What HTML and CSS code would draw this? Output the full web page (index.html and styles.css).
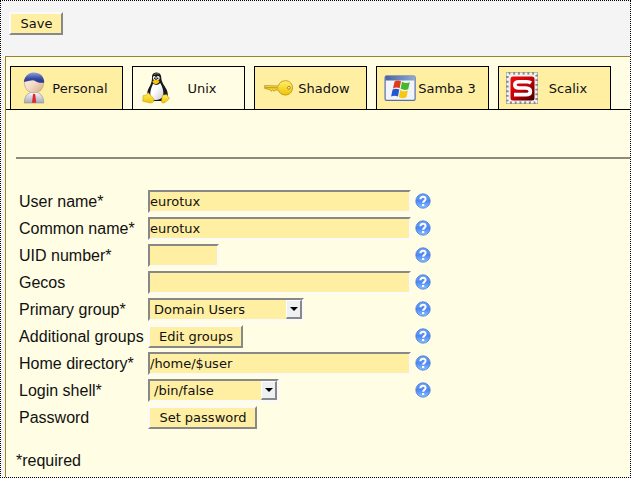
FILE: index.html
```html
<!DOCTYPE html>
<html lang="en">
<head>
<meta charset="utf-8">
<title>User account</title>
<link rel="stylesheet" href="styles.css">
</head>
<body>
<svg width="0" height="0" class="defs">
  <defs>
    <linearGradient id="helpFill" x1="0" y1="0" x2="0" y2="1"><stop offset="0" stop-color="#6ea4f4"/><stop offset=".5" stop-color="#4d86f4"/><stop offset="1" stop-color="#8cc4ff"/></linearGradient>
    <linearGradient id="hair" x1="0" y1="0" x2="0" y2="1"><stop offset="0" stop-color="#8fa4e0"/><stop offset=".6" stop-color="#3649a0"/><stop offset="1" stop-color="#26348a"/></linearGradient>
    <linearGradient id="skin" x1="0" y1="0" x2="1" y2="1"><stop offset="0" stop-color="#fff0e0"/><stop offset=".5" stop-color="#f3dcc8"/><stop offset="1" stop-color="#d6a77e"/></linearGradient>
    <linearGradient id="coat" x1="0" y1="0" x2="0" y2="1"><stop offset="0" stop-color="#f5f5fa"/><stop offset="1" stop-color="#a9a9b8"/></linearGradient>
    <linearGradient id="gold" x1="0" y1="0" x2="0" y2="1"><stop offset="0" stop-color="#fff06a"/><stop offset="1" stop-color="#efc400"/></linearGradient>
    <linearGradient id="red" x1="0" y1="0" x2="1" y2="1"><stop offset="0" stop-color="#f00c10"/><stop offset=".5" stop-color="#c40008"/><stop offset="1" stop-color="#3c0000"/></linearGradient>
    <linearGradient id="bar" x1="0" y1="0" x2="1" y2="0"><stop offset="0" stop-color="#4a64a4"/><stop offset="1" stop-color="#8fa8d4"/></linearGradient>
    <linearGradient id="belly" x1="0" y1="0" x2="1" y2="1"><stop offset=".4" stop-color="#fff"/><stop offset="1" stop-color="#c8c8d0"/></linearGradient>
    <symbol id="help" viewBox="0 0 16 16">
      <circle cx="8" cy="8" r="7.2" fill="url(#helpFill)" stroke="#4478d8" stroke-width=".8"/>
      <path d="M5.4 6.2C5.5 2.9 10.7 2.9 10.6 6.1C10.6 7.8 8.1 8 8.1 9.8" fill="none" stroke="#fff" stroke-width="2"/>
      <rect x="7" y="11" width="2.2" height="2" fill="#fff"/>
    </symbol>
  </defs>
</svg>
<div class="page">
  <div class="toolbar"><button class="button save">Save</button></div>
  <div class="panel">
    <div class="tabs">
      <div class="tab">
        <svg class="icon" viewBox="0 0 32 32">
          <path d="M6.3 31C6.5 25 8.5 21.8 13 20.5H19C23.5 21.8 25.5 25 25.8 31Z" fill="url(#coat)" stroke="#8b8b98" stroke-width=".6"/>
          <path d="M12 20.5L16 25L20 20.5Z" fill="#fff"/>
          <path d="M15 22H17.2L18.2 30.8H14Z" fill="#e0282b"/>
          <ellipse cx="16" cy="11.3" rx="9.6" ry="9.8" fill="url(#skin)" stroke="#b0998a" stroke-width=".6"/>
          <path d="M5.8 10C7 3 11 .5 16 .5C22 .5 26 4 26.3 10.5C23 11.2 19 10.4 15.5 8.2C12 8.4 8.5 9.2 5.8 10Z" fill="url(#hair)"/>
        </svg>
        <span class="caption">Personal</span>
      </div>
      <div class="tab active">
        <svg class="icon" viewBox="0 0 32 32">
          <path d="M12 4.5C12-.8 21-.8 21.2 4.8C21.2 10 24 13 26.3 17C29 22 28 28.5 24 29H11C6 27 6.5 20 8.8 16C11 12 12.3 9 12 4.5Z" fill="#181818"/>
          <path d="M13.2 11.5C15 13.5 18 13.4 20.2 11C22.5 15 24 19 23.2 24C21 28.5 13.5 29 11.3 26.4C9 22 11.2 15.6 13.2 11.5Z" fill="url(#belly)"/>
          <path d="M14 2.5Q16.5 1 19 2" fill="none" stroke="#777" stroke-width="1"/>
          <ellipse cx="14.3" cy="6" rx="1.4" ry="2" fill="#fff"/><ellipse cx="18" cy="6" rx="1.7" ry="2.1" fill="#fff"/>
          <circle cx="14.6" cy="6.3" r=".7"/><circle cx="17.7" cy="6.3" r=".8"/>
          <path d="M12.4 9.2Q16 6.4 19.5 9Q19.5 11 16.4 12.2Q13 11.8 12.4 9.2Z" fill="#ffc20a"/>
          <path d="M8 20.4L13.8 26.8Q14.5 30.8 10.5 31L2.7 29.2L3.2 23.5L6.2 23.1Z" fill="url(#gold)" stroke="#c78e00" stroke-width=".5"/>
          <path d="M22.4 23.3L26.5 22.6L29.5 26.5L25.5 30.1Q22.2 32.2 21.4 29.5Z" fill="url(#gold)" stroke="#c78e00" stroke-width=".5"/>
        </svg>
        <span class="caption">Unix</span>
      </div>
      <div class="tab">
        <svg class="icon" viewBox="0 0 32 32">
          <path d="M2.7 13.6L16.1 14C17.3 10.5 20 8.7 23.5 8.7C27.7 8.7 30.6 12 30.5 15.9C30.4 20 27.5 23 23.3 23C19.9 23 17.2 21 16.3 18H13.3L12.1 19.3L10.7 18L9.1 19.2L7.5 17.5L2.7 16.4Z" fill="url(#gold)" stroke="#b68e17" stroke-width=".8"/>
          <path d="M3.3 15.6L16.5 15.9" stroke="#a98625" stroke-width=".8"/>
          <circle cx="26.9" cy="15.8" r="1.4" fill="#fff5c0" stroke="#927019" stroke-width=".8"/>
        </svg>
        <span class="caption">Shadow</span>
      </div>
      <div class="tab">
        <svg class="icon" viewBox="0 0 32 32">
          <rect x="1.1" y="4" width="30" height="24.3" rx="1.4" fill="#f3f4fb" stroke="#5770a8" stroke-width="1.2"/>
          <path d="M1.5 3.7H30.8V8.5H1.5Z" fill="url(#bar)"/>
          <path d="M10.6 9.5Q13.5 7.5 17 9.3L15.6 16.2Q12.3 14.8 9 16.4Z" fill="#df3b17"/>
          <path d="M18 9.8Q21.8 12 25.8 10.3L24.2 17.3Q20.5 18.8 16.6 16.8Z" fill="#47b72b"/>
          <path d="M8.6 17.6Q12 16 15.3 17.6L13.9 24.4Q10.3 23 7.1 24.6Z" fill="#2457cf"/>
          <path d="M16.3 18.1Q20 20.2 23.9 18.6L22.4 25.3Q18.4 27.2 14.8 24.9Z" fill="#f7c811"/>
        </svg>
        <span class="caption samba">Samba 3</span>
      </div>
      <div class="tab">
        <svg class="icon" viewBox="0 0 32 32">
          <rect width="32" height="32" fill="#8b8a84"/>
          <rect x="2.6" y="2.6" width="26.8" height="26.8" fill="#f4f2ee"/>
          <rect x="1.8" y="1.8" width="28.4" height="28.4" fill="none" stroke="#f4f2ee" stroke-width="2.6" stroke-dasharray="2.8 1.93" stroke-dashoffset="-2.6"/>
          <rect x="4.5" y="4.5" width="24" height="24" rx="2.5" fill="url(#red)"/>
          <path d="M25 11Q23.5 9.8 21 9.8H13Q8.8 9.8 8.8 13Q8.8 15.8 13 16H20Q24.4 16.2 24.4 19.4Q24.4 22.5 20 22.6H8" fill="none" stroke="#fff" stroke-width="3.6"/>
        </svg>
        <span class="caption">Scalix</span>
      </div>
    </div>
    <div class="content">
      <div class="rule"></div>
      <div class="form">
        <label>User name*</label><div><input class="field" value="eurotux"></div><svg class="help"><use href="#help"/></svg>
        <label>Common name*</label><div><input class="field" value="eurotux"></div><svg class="help"><use href="#help"/></svg>
        <label>UID number*</label><div><input class="field short"></div><svg class="help"><use href="#help"/></svg>
        <label>Gecos</label><div><input class="field"></div><svg class="help"><use href="#help"/></svg>
        <label>Primary group*</label><div><div class="select group"><span>Domain Users</span><i class="drop"></i></div></div><svg class="help"><use href="#help"/></svg>
        <label class="wide">Additional groups</label><div><button class="button edit">Edit groups</button></div><svg class="help"><use href="#help"/></svg>
        <label>Home directory*</label><div><input class="field" value="/home/$user"></div><svg class="help"><use href="#help"/></svg>
        <label>Login shell*</label><div><div class="select shell"><span>/bin/false</span><i class="drop"></i></div></div><svg class="help"><use href="#help"/></svg>
        <label>Password</label><div><button class="button password">Set password</button></div>
      </div>
      <p class="note">*required</p>
    </div>
  </div>
</div>
</body>
</html>
```
FILE: styles.css
```css
* { box-sizing: border-box; }
body {
  margin: 0;
  height: 478px;
  overflow: hidden;
  background: #f4f4f4;
  color: #111;
  font: 16px "Liberation Sans", sans-serif;
}
.defs { position: absolute; }
.page {
  height: 478px;
  border: 1px dotted #000;
  display: flex;
  flex-direction: column;
}
.toolbar { height: 55px; padding: 11px 0 0 8px; }
.button, .field, .select {
  display: block;
  margin: 0;
  background: #ffefa3;
  color: #111;
  font: 13px "DejaVu Sans", sans-serif;
  border-radius: 0;
}
.button {
  height: 23px;
  padding: 0 0 1px 1px;
  border: 2px solid;
  border-color: #fafafa #888 #888 #fafafa;
}
.save { width: 54px; }
.edit { width: 95px; }
.password { width: 109px; }
.panel {
  flex: 1;
  margin-left: 4px;
  background: #fffde3;
  border: solid #9c8424;
  border-width: 1px 0 0 1px;
}
.tabs {
  height: 53px;
  padding: 9px 0 0 4px;
  display: flex;
  gap: 9px;
  border-bottom: 1px solid #000;
}
.tab {
  width: 113px;
  height: 43px;
  padding-left: 7px;
  display: flex;
  align-items: center;
  background: #ffefa3;
  border: 1px solid #000;
  border-bottom: 0;
  font: 13px "DejaVu Sans", sans-serif;
}
.tab.active { background: #fffde3; }
.icon { width: 32px; height: 32px; flex: none; }
.caption { width: 60px; text-align: center; white-space: nowrap; }
.samba { margin-left: 1px; }
.content { padding-left: 10px; }
.rule { margin-top: 47px; height: 2px; background: #8d897c; }
.form {
  margin: 29px 0 0 3px;
  display: grid;
  grid-template-columns: 129px 267px 16px;
  grid-auto-rows: 27px;
  align-items: center;
}
.wide { letter-spacing: 0.07px; }
.field {
  width: 263px;
  height: 23px;
  padding: 0;
  border: 2px solid;
  border-color: #888 #fafafa #fafafa #888;
  outline: 0;
}
.short { width: 71px; }
.help { width: 16px; height: 16px; margin-top: -1px; }
.select {
  height: 23px;
  padding-left: 4px;
  border: 2px solid;
  border-color: #888 #fafafa #fafafa #888;
  display: flex;
  justify-content: space-between;
  align-items: center;
}
.group { width: 156px; }
.shell { width: 131px; }
.drop {
  width: 16px;
  height: 19px;
  display: flex;
  align-items: center;
  justify-content: center;
  background: #edf1f4;
  border: solid;
  border-width: 1px 2px 2px 1px;
  border-color: #fff #888 #888 #fff;
}
.drop::after {
  content: "";
  border: 4px solid transparent;
  border-top-color: #000;
  border-bottom: 0;
}
.note { margin: 21px 0 0; line-height: 18px; }
```
